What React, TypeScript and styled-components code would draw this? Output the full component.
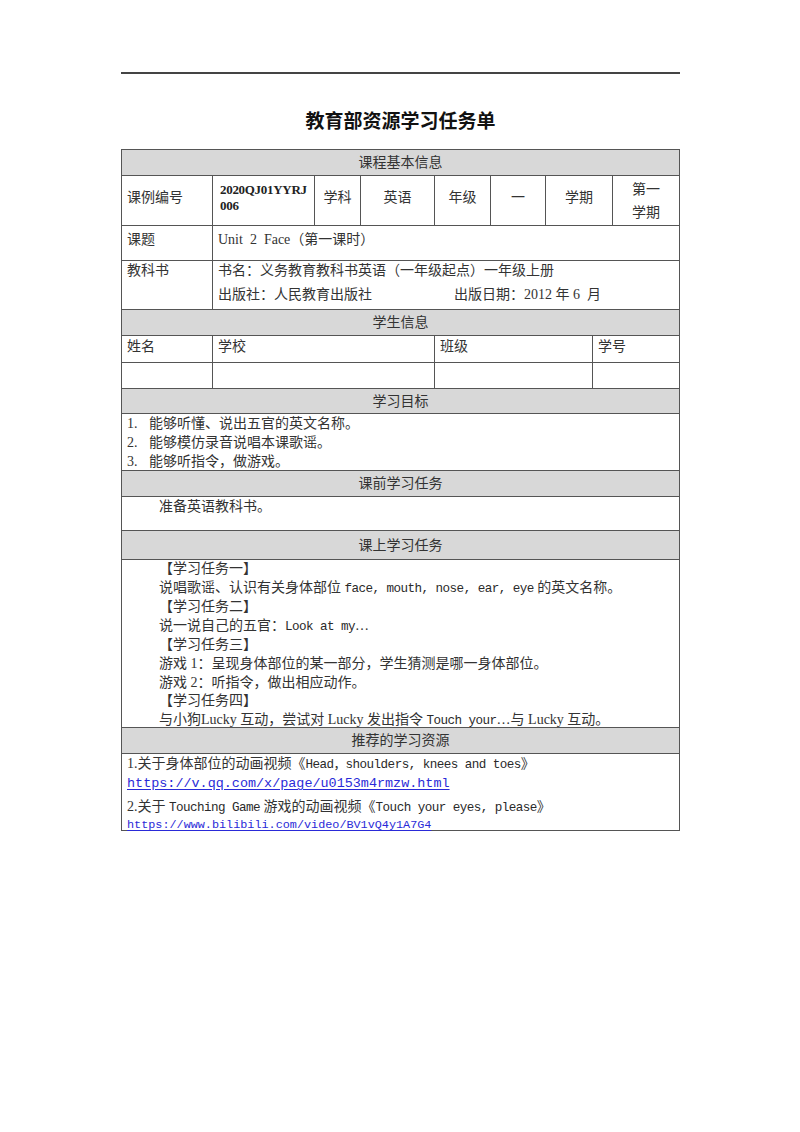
import React from "react";
import styled, { createGlobalStyle } from "styled-components";

const GlobalStyle = createGlobalStyle`
  html, body { margin: 0; padding: 0; background: #ffffff; }
  body {
    font-family: "Liberation Serif", "Noto Sans CJK SC", serif;
    color: #333333;
    font-size: 14px;
  }
`;

const LINE = "#555555";

const Page = styled.div`
  width: 800px;
  min-height: 1132px;
  box-sizing: border-box;
  padding: 72px 120px 0 121px;
  display: flex;
  flex-direction: column;
`;

const Rule = styled.div`
  height: 2px;
  background: #444444;
`;

const Title = styled.h1`
  margin: 34px 0 17px;
  font-family: "Noto Sans CJK SC", sans-serif;
  font-weight: 700;
  font-size: 19px;
  line-height: 24px;
  text-align: center;
  color: #111111;
`;

const Table = styled.div`
  width: 559px;
  box-sizing: border-box;
  border: 1px solid ${LINE};
  border-bottom: none;
  display: flex;
  flex-direction: column;
`;

const Row = styled.div<{ $cols: string; $h: number; $head?: boolean }>`
  display: grid;
  grid-template-columns: ${(p) => p.$cols};
  height: ${(p) => p.$h}px;
  box-sizing: border-box;
  border-bottom: 1px solid ${LINE};
  background: ${(p) => (p.$head ? "#d8d8d8" : "#ffffff")};
`;

const Cell = styled.div<{
  $center?: boolean;
  $top?: boolean;
  $pt?: number;
  $pl?: number;
  $lh?: number;
}>`
  box-sizing: border-box;
  border-right: 1px solid ${LINE};
  display: flex;
  flex-direction: column;
  justify-content: ${(p) => (p.$top ? "flex-start" : "center")};
  align-items: ${(p) => (p.$center ? "center" : "flex-start")};
  text-align: ${(p) => (p.$center ? "center" : "left")};
  padding: ${(p) => p.$pt ?? 0}px 2px 0 ${(p) => p.$pl ?? 5}px;
  line-height: ${(p) => p.$lh ?? 20}px;
  white-space: pre;
  &:last-child { border-right: none; }
`;

const Lift = styled.span`
  margin-top: -6px;
`;

const HeadText = styled.div`
  grid-column: 1 / -1;
  display: flex;
  align-items: center;
  justify-content: center;
  line-height: 20px;
  padding-top: 1px;
`;

const Code = styled.div`
  font-weight: 700;
  font-size: 13px;
  letter-spacing: -0.3px;
  line-height: 16px;
  color: #222222;
  margin-top: -6px;
`;

const Pub = styled.div`
  display: flex;
  margin-top: 4px;
`;

const PubLeft = styled.span`
  width: 236px;
`;

const Goal = styled.div`
  display: flex;
  line-height: 19px;
`;

const Num = styled.span`
  width: 22px;
`;

const Block = styled.div<{ $lh: number; $indent: number }>`
  padding-left: ${(p) => p.$indent}px;
  line-height: ${(p) => p.$lh}px;
  white-space: pre;
`;

const Mono = styled.span`
  font-family: "Liberation Mono", "Noto Sans CJK SC", monospace;
  font-size: 12.6px;
  letter-spacing: -0.55px;
  color: #2a2a2a;
`;

const ResLine = styled.div<{ $mt?: number }>`
  line-height: 19px;
  margin-top: ${(p) => p.$mt ?? 0}px;
  white-space: pre;
`;

const Link = styled.a<{ $size: number; $lh: number }>`
  display: block;
  font-family: "Liberation Mono", monospace;
  font-size: ${(p) => p.$size}px;
  line-height: ${(p) => p.$lh}px;
  color: #2a2ad8;
  text-decoration: underline;
  text-underline-offset: 2px;
`;

const Section: React.FC<{ title: string; h: number }> = ({ title, h }) => (
  <Row $cols="1fr" $h={h} $head>
    <HeadText>{title}</HeadText>
  </Row>
);

const COLS_INFO = "91px 102px 46px 74px 56px 55px 67px 66px";
const COLS_TWO = "91px 466px";
const COLS_STUDENT = "91px 222px 158px 86px";

export default function App() {
  return (
    <>
      <GlobalStyle />
      <Page>
        <Rule />
        <Title>教育部资源学习任务单</Title>
        <Table>
          <Section title="课程基本信息" h={26} />
          <Row $cols={COLS_INFO} $h={50}>
            <Cell>
              <Lift>课例编号</Lift>
            </Cell>
            <Cell $pl={7}>
              <Code>
                2020QJ01YYRJ
                <br />
                006
              </Code>
            </Cell>
            <Cell $center $pl={2}>
              <Lift>学科</Lift>
            </Cell>
            <Cell $center $pl={2}>
              <Lift>英语</Lift>
            </Cell>
            <Cell $center $pl={2}>
              <Lift>年级</Lift>
            </Cell>
            <Cell $center $pl={2}>
              <Lift>一</Lift>
            </Cell>
            <Cell $center $pl={2}>
              <Lift>学期</Lift>
            </Cell>
            <Cell $center $pl={2} $lh={23}>
              {"第一\n学期"}
            </Cell>
          </Row>
          <Row $cols={COLS_TWO} $h={35}>
            <Cell $top $pt={4}>课题</Cell>
            <Cell $top $pt={4}>Unit  2  Face（第一课时）</Cell>
          </Row>
          <Row $cols={COLS_TWO} $h={49}>
            <Cell $top>教科书</Cell>
            <Cell $top>
              <div>书名：义务教育教科书英语（一年级起点）一年级上册</div>
              <Pub>
                <PubLeft>出版社：人民教育出版社</PubLeft>
                <span>出版日期：2012 年 6  月</span>
              </Pub>
            </Cell>
          </Row>
          <Section title="学生信息" h={26} />
          <Row $cols={COLS_STUDENT} $h={27}>
            <Cell $top $pt={1}>姓名</Cell>
            <Cell $top $pt={1}>学校</Cell>
            <Cell $top $pt={1}>班级</Cell>
            <Cell $top $pt={1}>学号</Cell>
          </Row>
          <Row $cols={COLS_STUDENT} $h={26}>
            <Cell />
            <Cell />
            <Cell />
            <Cell />
          </Row>
          <Section title="学习目标" h={25} />
          <Row $cols="1fr" $h={57}>
            <Cell $top>
              <Goal>
                <Num>1.</Num>能够听懂、说出五官的英文名称。
              </Goal>
              <Goal>
                <Num>2.</Num>能够模仿录音说唱本课歌谣。
              </Goal>
              <Goal>
                <Num>3.</Num>能够听指令，做游戏。
              </Goal>
            </Cell>
          </Row>
          <Section title="课前学习任务" h={26} />
          <Row $cols="1fr" $h={34}>
            <Cell $top>
              <Block $lh={19} $indent={32}>准备英语教科书。</Block>
            </Cell>
          </Row>
          <Section title="课上学习任务" h={29} />
          <Row $cols="1fr" $h={168}>
            <Cell $top>
              <Block $lh={18.6} $indent={32}>
                <div>【学习任务一】</div>
                <div>
                  说唱歌谣、认识有关身体部位 <Mono>face, mouth, nose, ear, eye</Mono> 的英文名称。
                </div>
                <div>【学习任务二】</div>
                <div>
                  说一说自己的五官：<Mono>Look at my</Mono>…
                </div>
                <div>【学习任务三】</div>
                <div>游戏 1：呈现身体部位的某一部分，学生猜测是哪一身体部位。</div>
                <div>游戏 2：听指令，做出相应动作。</div>
                <div>【学习任务四】</div>
                <div>
                  与小狗Lucky 互动，尝试对 Lucky 发出指令 <Mono>Touch your</Mono>…与 Lucky 互动。
                </div>
              </Block>
            </Cell>
          </Row>
          <Section title="推荐的学习资源" h={26} />
          <Row $cols="1fr" $h={77}>
            <Cell $top>
              <ResLine>
                1.关于身体部位的动画视频《<Mono>Head，shoulders, knees and toes</Mono>》
              </ResLine>
              <Link href="#" $size={13.45} $lh={17}>
                https://v.qq.com/x/page/u0153m4rmzw.html
              </Link>
              <ResLine $mt={5}>
                2.关于 <Mono>Touching Game</Mono> 游戏的动画视频《<Mono>Touch your eyes, please</Mono>》
              </ResLine>
              <Link href="#" $size={11.8} $lh={15}>
                https://www.bilibili.com/video/BV1vQ4y1A7G4
              </Link>
            </Cell>
          </Row>
        </Table>
      </Page>
    </>
  );
}
